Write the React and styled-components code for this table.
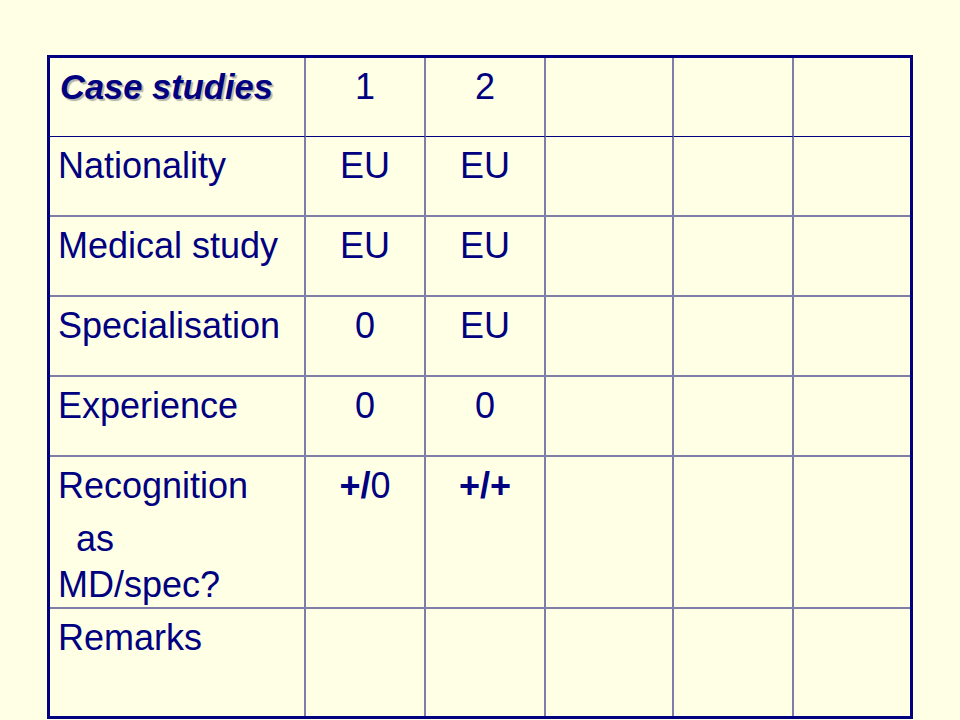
import styled, { createGlobalStyle } from "styled-components";

const GlobalStyle = createGlobalStyle`
  html, body {
    margin: 0;
    padding: 0;
    background: #FFFFE5;
  }
  body {
    font-family: "Liberation Sans", Arial, sans-serif;
  }
`

const PageStyled = styled.div`
  width: 960px;
  height: 720px;
  box-sizing: border-box;
  padding: 55px 0 0 47px;
  background: #FFFFE5;
  overflow: hidden;
`

const GridStyled = styled.div`
  display: grid;
  grid-template-columns: 256px 120px 120px 128px 120px 116px;
  grid-template-rows: 79px 80px 80px 80px 80px 152px 107px;
  width: max-content;
  border: 3px solid #000080;
  color: #000080;
  font-size: 36px;
  line-height: 40px;
`

const CellStyled = styled.div`
  box-sizing: border-box;
  border-right: ${p => (p.$lastCol ? "none" : "2px solid #7E7EA8")};
  border-bottom: ${p =>
    p.$lastRow ? "none" : p.$head ? "1px solid #000080" : "2px solid #7E7EA8"};
  padding: 9px 0 0 ${p => (p.$label ? "8px" : "0")};
  text-align: ${p => (p.$label ? "left" : "center")};
  white-space: nowrap;
`

const TitleStyled = styled.span`
  font-size: 34.5px;
  font-weight: 700;
  font-style: italic;
  padding-left: 2px;
  text-shadow: 2px 2px 1px rgba(0, 0, 40, 0.3);
`

const LineStyled = styled.div`
  padding-left: ${p => p.$indent || 0}px;
  margin-top: ${p => p.$gap || 0}px;
`

const Bold = styled.b`
  font-weight: 700;
`

const rows = [
  ["Nationality", "EU", "EU"],
  ["Medical study", "EU", "EU"],
  ["Specialisation", "0", "EU"],
  ["Experience", "0", "0"],
  [
    <>
      <LineStyled>Recognition</LineStyled>
      <LineStyled $indent={18} $gap={13}>as</LineStyled>
      <LineStyled $gap={6}>MD/spec?</LineStyled>
    </>,
    <><Bold>+/</Bold>0</>,
    <Bold>+/+</Bold>,
  ],
  ["Remarks", "", ""],
]

export default function App() {
  const all = [[<TitleStyled>Case studies</TitleStyled>, "1", "2"], ...rows]

  return (
    <PageStyled>
      <GlobalStyle />
      <GridStyled>
        {all.map((row, r) =>
          [0, 1, 2, 3, 4, 5].map(c => (
            <CellStyled
              key={`${r}-${c}`}
              $label={c === 0}
              $head={r === 0}
              $lastRow={r === all.length - 1}
              $lastCol={c === 5}
            >
              {row[c] || ""}
            </CellStyled>
          ))
        )}
      </GridStyled>
    </PageStyled>
  )
}
